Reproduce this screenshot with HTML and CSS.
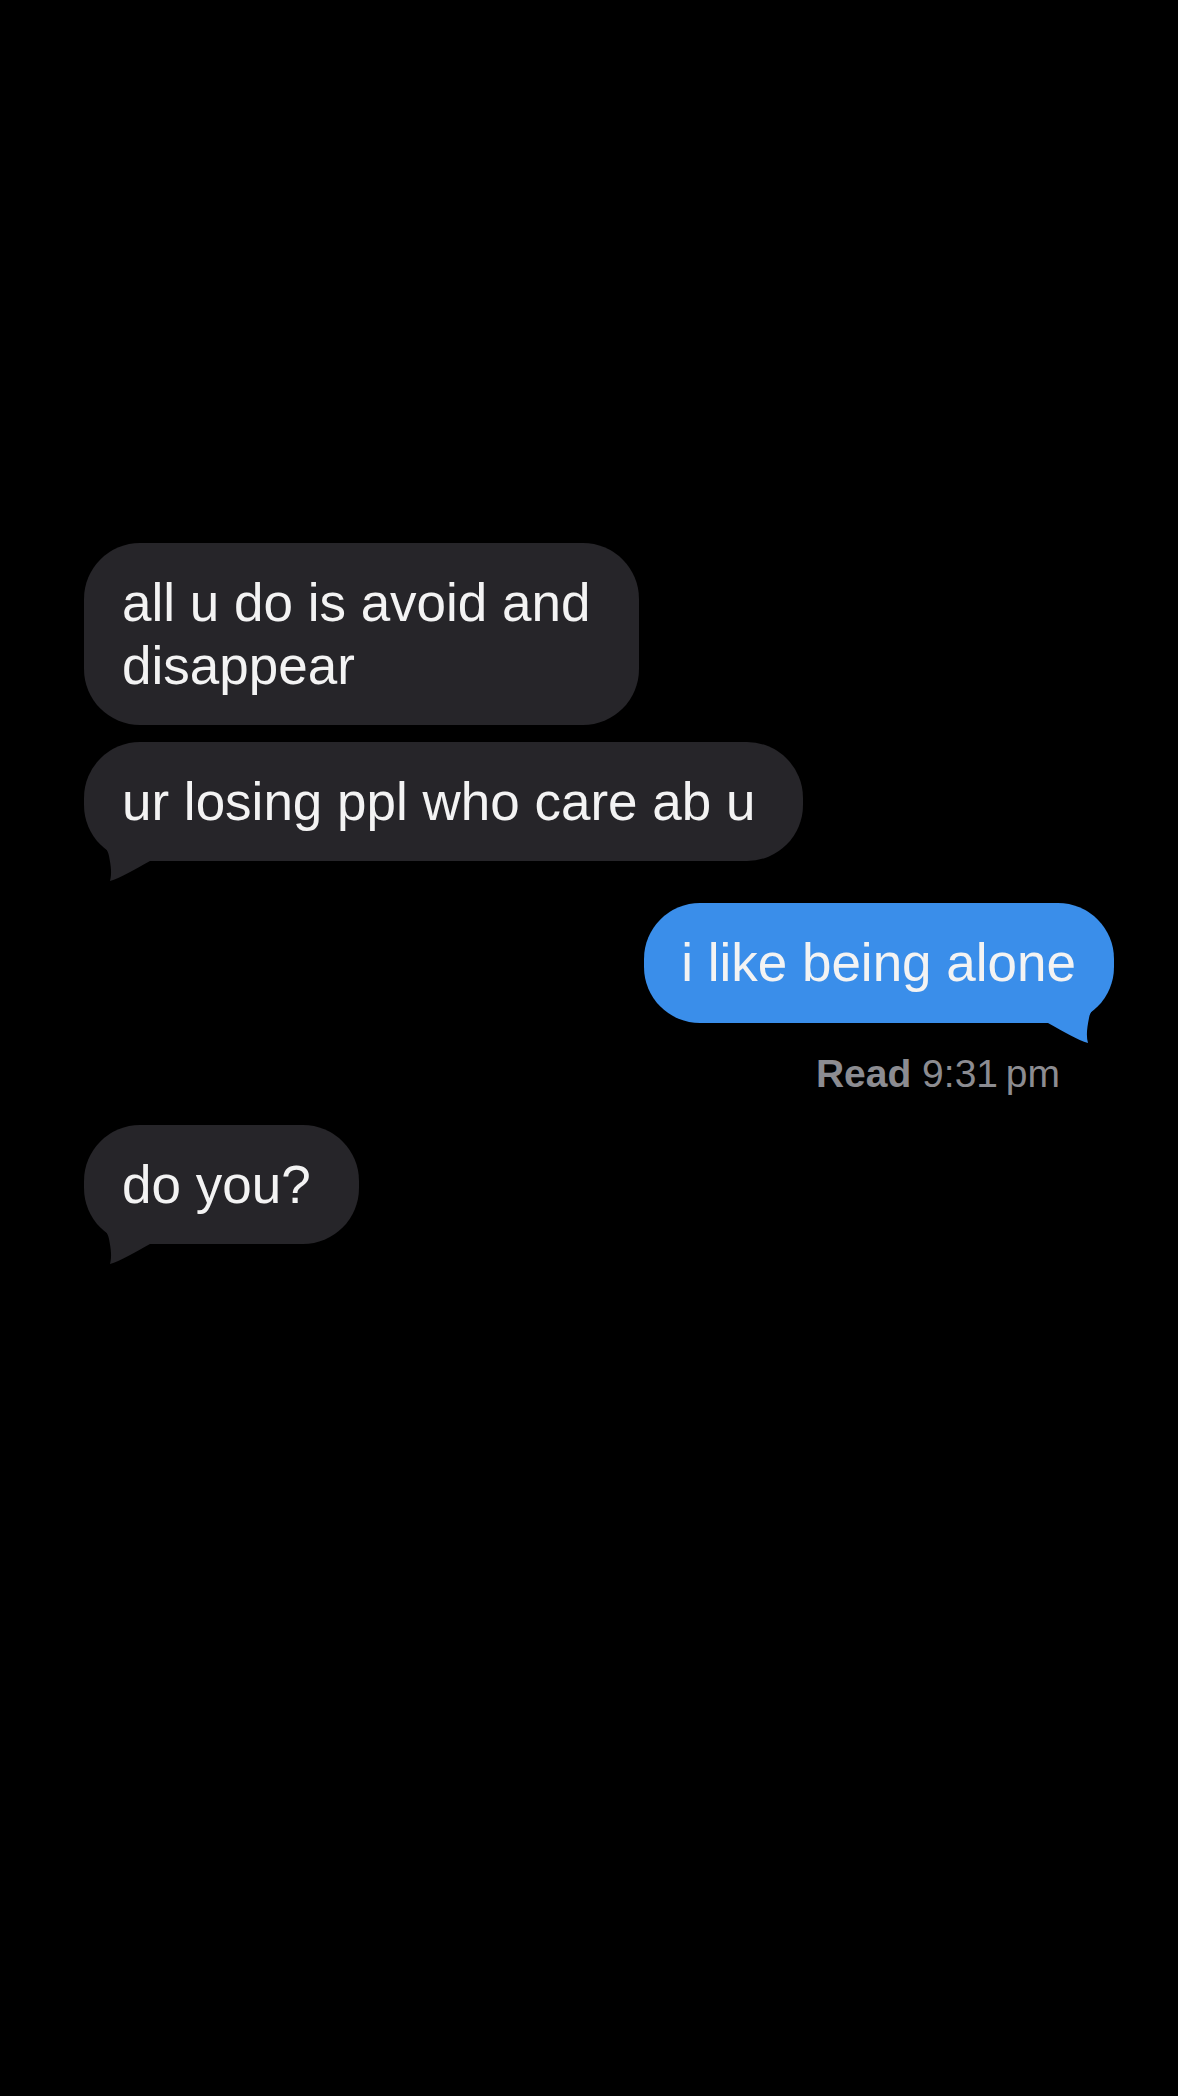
FILE: index.html
```html
<!DOCTYPE html>
<html lang="en">
<head>
  <meta charset="UTF-8">
  <meta name="viewport" content="width=device-width, initial-scale=1.0">
  <title>Messages</title>
  <link rel="stylesheet" href="styles.css">
</head>
<body>
  <div class="thread">

    <!-- Incoming messages -->
    <div class="bubble incoming">all u do is avoid and<br>disappear</div>
    <div class="bubble incoming tailed">
      ur losing ppl who care ab u
      <svg class="tail" viewBox="0 0 70 50" width="70" height="50"><path d="M14 0 L14 7 C20 14 24 18 25 24 C27 34 28 42 26 49 C36 46 50 38 66 29 L66 0 Z"/></svg>
    </div>

    <!-- Outgoing message -->
    <div class="bubble outgoing tailed">
      i like being alone
      <svg class="tail" viewBox="0 0 70 50" width="70" height="50"><path d="M14 0 L14 7 C20 14 24 18 25 24 C27 34 28 42 26 49 C36 46 50 38 66 29 L66 0 Z"/></svg>
    </div>
    <div class="receipt"><b>Read</b> 9:31&thinsp;pm</div>

    <div class="bubble incoming tailed">
      do you?
      <svg class="tail" viewBox="0 0 70 50" width="70" height="50"><path d="M14 0 L14 7 C20 14 24 18 25 24 C27 34 28 42 26 49 C36 46 50 38 66 29 L66 0 Z"/></svg>
    </div>

  </div>
</body>
</html>
```

FILE: styles.css
```css
body {
  margin: 0;
  padding: 0;
  background: #000000;
  font-family: "Liberation Sans", Arial, sans-serif;
  color: #f3f3f3;
}

.thread {
  display: flex;
  flex-direction: column;
  padding: 543px 64px 0 84px;
  min-height: 2096px;
  box-sizing: border-box;
}

.bubble {
  position: relative;
  font-size: 53px;
  line-height: 63px;
  padding: 28px 48px 28px 38px;
  border-radius: 56px;
  white-space: nowrap;
}

.incoming {
  align-self: flex-start;
  background: #262529;
  margin-bottom: 17px;
}

.incoming .tail {
  fill: #262529;
}

.outgoing {
  align-self: flex-end;
  background: #3a8eea;
  padding: 28px 38px 29px 37px;
  margin-top: 25px;
}

.outgoing .tail {
  fill: #3a8eea;
  left: auto;
  right: 0;
  transform: scaleX(-1);
}

.tail {
  position: absolute;
  left: 0;
  bottom: -21px;
}

.receipt {
  align-self: flex-end;
  margin: 28px 54px 28px 0;
  font-size: 39px;
  line-height: 46px;
  color: #8c8c91;
}

.receipt b {
  font-weight: 700;
}
```
